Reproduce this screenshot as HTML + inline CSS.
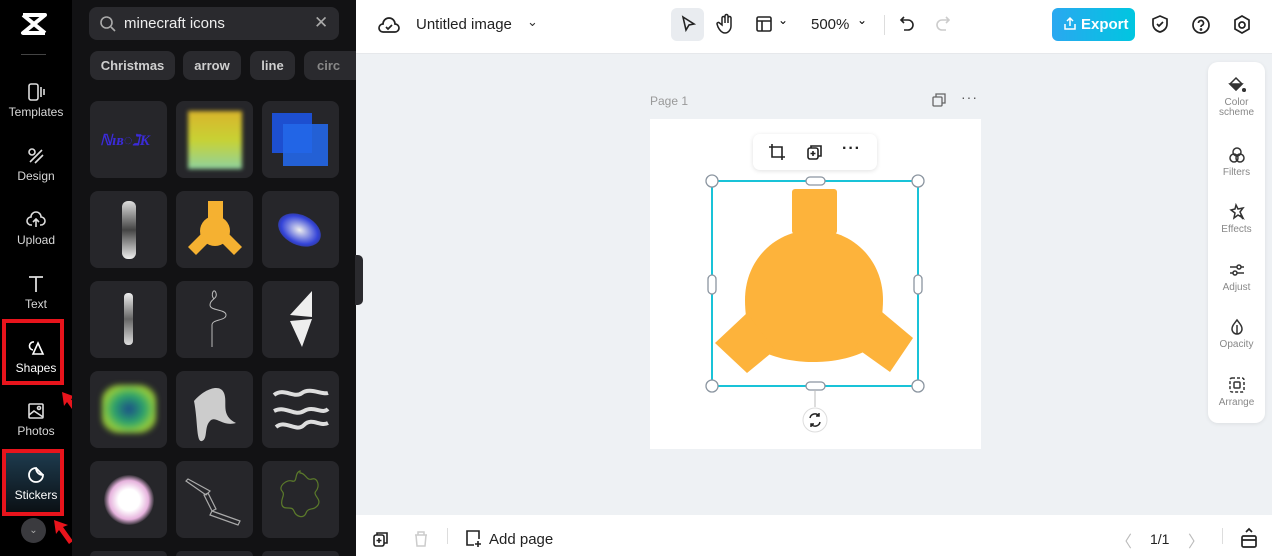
<!DOCTYPE html>
<html style="width:1272px;height:556px;overflow:hidden"><head><meta charset="utf-8"><style>
*{box-sizing:border-box;margin:0;padding:0}
body{width:1272px;height:556px;overflow:hidden;position:relative;font-family:"Liberation Sans",sans-serif;background:#eef1f4}
.abs{position:absolute}
.rail{left:0;top:0;width:72px;height:556px;background:#000;overflow:hidden}
.ri{position:absolute;left:0;width:72px;text-align:center;color:#d8d8d8;font-size:12px}
.ri svg{display:block;margin:0 auto 3px}
.panel{left:72px;top:0;width:284px;height:556px;background:#121214;overflow:hidden}
.tile{position:absolute;width:77px;height:77px;background:#26262a;border-radius:8px;overflow:hidden}
.chip{position:absolute;top:51px;height:29px;background:#2a2a2e;border-radius:8px;color:#cfcfcf;font-size:13px;font-weight:bold;line-height:29px;text-align:center}
.top{left:356px;top:0;width:916px;height:54px;background:#fff;border-bottom:1px solid #e6e8eb}
.bot{left:356px;top:515px;width:916px;height:41px;background:#fff}
.rp{left:1208px;top:62px;width:57px;height:361px;background:#fff;border-radius:10px;box-shadow:0 1px 4px rgba(0,0,0,.08)}
.rpi{position:absolute;left:0;width:57px;text-align:center;color:#888;font-size:10px;line-height:10px}
.rpi svg{display:block;margin:0 auto 4px}
</style></head><body>
<div class="abs rail">
 <svg class="abs" style="left:20px;top:12px" width="28" height="24" viewBox="0 0 28 24"><path d="M3 3h22L3 21h22M3 3l22 18" fill="none" stroke="#fff" stroke-width="4" stroke-linejoin="round"/></svg>
 <div class="abs" style="left:21px;top:54px;width:25px;height:1px;background:#444"></div>
 <div class="ri" style="top:82px"><svg width="20" height="20" viewBox="0 0 20 20" fill="none" stroke="#ddd" stroke-width="1.6"><rect x="3" y="2" width="9" height="16" rx="2"/><path d="M15 5v10M18 7v6"/></svg>Templates</div>
 <div class="ri" style="top:146px"><svg width="20" height="20" viewBox="0 0 20 20" fill="none" stroke="#ddd" stroke-width="1.6"><circle cx="6" cy="6" r="3"/><path d="M4 16l12-12M9 17l8-8"/></svg>Design</div>
 <div class="ri" style="top:210px"><svg width="20" height="20" viewBox="0 0 20 20" fill="none" stroke="#ddd" stroke-width="1.6"><path d="M6 15H5a4 4 0 0 1 0-8 5 5 0 0 1 10 0 4 4 0 0 1 0 8h-1M10 17V9M7 12l3-3 3 3"/></svg>Upload</div>
 <div class="ri" style="top:274px"><svg width="20" height="20" viewBox="0 0 20 20" fill="none" stroke="#ddd" stroke-width="1.8"><path d="M3 3h14M10 3v15"/></svg>Text</div>
 <div class="ri" style="top:338px;color:#fff"><svg width="20" height="20" viewBox="0 0 20 20" fill="none" stroke="#fff" stroke-width="1.6"><path d="M8 4a4 4 0 1 0-1 8M12 5l5 11H7z"/></svg>Shapes</div>
 <div class="abs" style="left:2px;top:319px;width:62px;height:66px;border:4px solid #e8141c"></div>
 <div class="ri" style="top:401px"><svg width="20" height="20" viewBox="0 0 20 20" fill="none" stroke="#ddd" stroke-width="1.6"><rect x="3" y="3" width="14" height="14" rx="1"/><path d="M3 14l5-4 9 6"/><circle cx="13" cy="7" r="1.5"/></svg>Photos</div>
 <div class="abs" style="left:5px;top:453px;width:56px;height:60px;background:linear-gradient(#1d3a4d,#0b1014)"></div>
 <div class="ri" style="top:465px;color:#fff"><svg width="20" height="20" viewBox="0 0 20 20" fill="none" stroke="#fff" stroke-width="1.8"><path d="M17 10a7 7 0 1 1-7-7c0 4 3 7 7 7zM10 3l7 7"/></svg>Stickers</div>
 <div class="abs" style="left:2px;top:449px;width:62px;height:67px;border:4px solid #e8141c"></div>
 <div class="abs" style="left:21px;top:518px;width:25px;height:25px;border-radius:50%;background:#3a3a3e;color:#aaa;font-size:10px;text-align:center;line-height:25px">⌄</div>
 <svg class="abs" style="left:58px;top:390px" width="26" height="34" viewBox="0 0 26 34"><path d="M4 2l2 14 3-4 10 14 4-3-10-14 5-2z" fill="#e8141c"/></svg>
 <svg class="abs" style="left:50px;top:518px" width="26" height="34" viewBox="0 0 26 34"><path d="M4 2l2 14 3-4 10 14 4-3-10-14 5-2z" fill="#e8141c"/></svg>
</div>
<div class="abs panel">
 <div class="abs" style="left:17px;top:7px;width:250px;height:33px;background:#2a2a2e;border-radius:8px"></div>
 <svg class="abs" style="left:27px;top:15px" width="18" height="18" viewBox="0 0 18 18" fill="none" stroke="#aaa" stroke-width="1.6"><circle cx="7.5" cy="7.5" r="5.5"/><path d="M12 12l4 4"/></svg>
 <div class="abs" style="left:52px;top:15px;color:#eee;font-size:15px">minecraft icons</div>
 <div class="abs" style="left:242px;top:13px;color:#aaa;font-size:17px">✕</div>
 <div class="chip" style="left:18px;width:85px">Christmas</div>
 <div class="chip" style="left:111px;width:58px">arrow</div>
 <div class="chip" style="left:178px;width:45px">line</div>
 <div class="chip" style="left:232px;width:52px;border-radius:8px 0 0 8px;color:#888;text-align:left;padding-left:13px">circ</div>
 <div class="tile" style="left:18px;top:101px"><div style="position:absolute;left:10px;top:30px;font:italic bold 15px 'Liberation Serif';color:#3b2bd8">ℕ︎ɪʙ◌ℷK</div></div>
 <div class="tile" style="left:104px;top:101px"><div style="position:absolute;left:12px;top:10px;width:54px;height:58px;background:linear-gradient(#d9b52c,#c8d234,#8fd29e);filter:blur(2px)"></div></div>
 <div class="tile" style="left:190px;top:101px"><div style="position:absolute;left:10px;top:12px;width:40px;height:40px;background:#1d4fd0"></div><div style="position:absolute;left:21px;top:23px;width:45px;height:42px;background:#2467e8;opacity:.9"></div></div>
 <div class="tile" style="left:18px;top:191px"><div style="position:absolute;left:32px;top:10px;width:14px;height:58px;background:linear-gradient(#ddd,#444,#eee);border-radius:6px"></div></div>
 <div class="tile" style="left:104px;top:191px"><svg width="77" height="77"><rect x="32" y="10" width="15" height="20" fill="#f5b131"/><circle cx="39" cy="40" r="15" fill="#f5b131"/><path d="M12 56l13-13 8 8-13 13zM66 56l-13-13-8 8 13 13z" fill="#f5b131"/></svg></div>
 <div class="tile" style="left:190px;top:191px"><div style="position:absolute;left:15px;top:24px;width:45px;height:30px;border-radius:50%;background:radial-gradient(#eee,#3444d8 60%,#26262a);transform:rotate(25deg)"></div></div>
 <div class="tile" style="left:18px;top:281px"><div style="position:absolute;left:34px;top:12px;width:9px;height:52px;background:linear-gradient(#eee,#666,#ddd);border-radius:4px"></div></div>
 <div class="tile" style="left:104px;top:281px"><svg width="77" height="77" fill="none" stroke="#bbb" stroke-width="1"><path d="M36 66V44c0-6 14-4 14-10s-16-4-16-10 8-6 6-12-6 2-2 6"/></svg></div>
 <div class="tile" style="left:190px;top:281px"><svg width="77" height="77"><path d="M50 10L28 34l22 2zM28 40l22-2-10 28z" fill="#eee"/></svg></div>
 <div class="tile" style="left:18px;top:371px"><div style="position:absolute;left:12px;top:14px;width:54px;height:48px;border-radius:30%;background:radial-gradient(#1a4c8a,#2ca36b 40%,#9bcf3a 70%,#26262a);filter:blur(3px)"></div></div>
 <div class="tile" style="left:104px;top:371px"><svg width="77" height="77"><path d="M18 30c10-12 26-18 30-8s-4 22 12 30c-14 4-20-8-26-2s-2 18-8 20-4-20-8-40z" fill="#ccc"/></svg></div>
 <div class="tile" style="left:190px;top:371px"><svg width="77" height="77" fill="none" stroke="#ddd" stroke-width="4"><path d="M12 24c10-8 20 4 28-2s20 2 26 0M12 40c12-6 20 6 30 0s18 4 24-2M14 56c10-8 20 6 28-2s16 2 24-2"/></svg></div>
 <div class="tile" style="left:18px;top:461px"><div style="position:absolute;left:14px;top:14px;width:50px;height:50px;border-radius:50%;background:radial-gradient(#fff 30%,#e6b3dd 55%,#26262a 72%)"></div></div>
 <div class="tile" style="left:104px;top:461px"><svg width="77" height="77" fill="none" stroke="#aaa" stroke-width="1.2"><path d="M12 18l22 12-4 4-20-14zM32 32l8 16-4 2-8-16zM36 50l28 10-2 4-28-10z"/></svg></div>
 <div class="tile" style="left:190px;top:461px"><svg width="77" height="77" fill="none" stroke="#5b7a2a" stroke-width="1.2"><path d="M38 12c6 0 6 8 12 6s8 8 4 12 6 8 2 14-10 2-12 8-10 4-12-2-10 0-12-6 4-10 0-14 4-12 10-10 2-8 8-10z"/></svg></div>
 <div class="tile" style="left:18px;top:551px;height:5px;border-radius:8px 8px 0 0"></div><div class="tile" style="left:104px;top:551px;height:5px;border-radius:8px 8px 0 0"></div><div class="tile" style="left:190px;top:551px;height:5px;border-radius:8px 8px 0 0"></div>
</div>
<div class="abs" style="left:355px;top:255px;width:8px;height:50px;background:#2a2a2e;border-radius:0 5px 5px 0"></div>
<div class="abs top">
 <svg class="abs" style="left:22px;top:15px" width="22" height="22" viewBox="0 0 22 22" fill="none" stroke="#222" stroke-width="1.7"><path d="M6 17H5a4 4 0 0 1 0-8 6 6 0 0 1 12 0 4 4 0 0 1 0 8z"/><path d="M8 12l2 2 4-4"/></svg>
 <div class="abs" style="left:60px;top:16px;font-size:15px;color:#222">Untitled image</div>
 <div class="abs" style="left:171px;top:14px;font-size:13px;color:#333">⌄</div>
 <div class="abs" style="left:315px;top:8px;width:33px;height:33px;background:#e9ecf0;border-radius:6px"></div>
 <svg class="abs" style="left:322px;top:14px" width="20" height="20" viewBox="0 0 20 20" fill="none" stroke="#222" stroke-width="1.6"><path d="M5 3l11 7-5 1-3 5z"/></svg>
 <svg class="abs" style="left:360px;top:13px" width="20" height="22" viewBox="0 0 20 22" fill="none" stroke="#222" stroke-width="1.5"><path d="M6 12V5a1.5 1.5 0 0 1 3 0v5V3a1.5 1.5 0 0 1 3 0v7V5a1.5 1.5 0 0 1 3 0v8c0 4-3 7-6 7s-5-2-7-6l-1-3a1.4 1.4 0 0 1 2.5-1z"/></svg>
 <svg class="abs" style="left:399px;top:15px" width="18" height="18" viewBox="0 0 18 18" fill="none" stroke="#222" stroke-width="1.6"><rect x="2" y="2" width="14" height="14" rx="1.5"/><path d="M2 6h14M7 6v10"/></svg>
 <div class="abs" style="left:422px;top:13px;font-size:12px">⌄</div>
 <div class="abs" style="left:455px;top:16px;font-size:15px;color:#222">500%</div>
 <div class="abs" style="left:501px;top:13px;font-size:12px">⌄</div>
 <div class="abs" style="left:528px;top:15px;width:1px;height:20px;background:#ddd"></div>
 <svg class="abs" style="left:542px;top:15px" width="18" height="18" viewBox="0 0 18 18" fill="none" stroke="#222" stroke-width="1.6"><path d="M6 2L3 5l3 3M3 5h7a5 5 0 0 1 0 10H6"/></svg>
 <svg class="abs" style="left:578px;top:15px" width="18" height="18" viewBox="0 0 18 18" fill="none" stroke="#ccc" stroke-width="1.6"><path d="M12 2l3 3-3 3M15 5H8a5 5 0 0 0 0 10h4"/></svg>
 <div class="abs" style="left:696px;top:8px;width:83px;height:33px;border-radius:6px;background:linear-gradient(90deg,#2aa8f0,#00c6e0);color:#fff;font-size:15px;font-weight:bold;line-height:33px;padding-left:29px">Export</div>
 <svg class="abs" style="left:707px;top:16px" width="14" height="15" viewBox="0 0 14 15" fill="none" stroke="#fff" stroke-width="1.5"><path d="M7 10V2M4 5l3-3 3 3M2 8v5h10V8"/></svg>
 <svg class="abs" style="left:795px;top:14px" width="18" height="20" viewBox="0 0 18 20" fill="none" stroke="#222" stroke-width="1.7"><path d="M9 2l7 3v5c0 4-3 7-7 8-4-1-7-4-7-8V5z"/><path d="M6 10l2 2 4-4"/></svg>
 <svg class="abs" style="left:835px;top:15px" width="20" height="20" viewBox="0 0 20 20" fill="none" stroke="#222" stroke-width="1.7"><circle cx="10" cy="10" r="8"/><path d="M7.5 8a2.5 2.5 0 1 1 3.5 2.3c-.8.4-1 1-1 1.7"/><circle cx="10" cy="14.5" r=".5" fill="#222"/></svg>
 <svg class="abs" style="left:876px;top:14px" width="20" height="22" viewBox="0 0 20 22" fill="none" stroke="#222" stroke-width="1.7"><path d="M10 2l7 4v9l-7 4-7-4V6z"/><circle cx="10" cy="11" r="3"/></svg>
</div>
<div class="abs" style="left:650px;top:94px;font-size:12px;color:#999">Page 1</div>
<svg class="abs" style="left:932px;top:93px" width="14" height="14" viewBox="0 0 14 14" fill="none" stroke="#666" stroke-width="1.3"><rect x="1" y="4" width="9" height="9" rx="1"/><path d="M4 4V1h9v9h-3"/></svg>
<div class="abs" style="left:961px;top:89px;font-size:14px;color:#555;letter-spacing:1px">···</div>
<div class="abs" style="left:650px;top:119px;width:331px;height:330px;background:#fff"></div>
<svg class="abs" style="left:0;top:0" width="1272" height="556">
 <g fill="#fdb33b">
  <rect x="792" y="189" width="45" height="45" rx="3"/>
  <path d="M745 300c0-40 30-70 69-70s69 30 69 70c0 25-8 45-15 50-20 10-40 12-54 12s-36-2-54-12c-8-6-15-25-15-50z"/>
  <path d="M715 343l32-30 28 37-28 23z"/>
  <path d="M913 338l-31-26-27 35 35 25z"/>
 </g>
 <rect x="712" y="181" width="206" height="205" fill="none" stroke="#19c3d8" stroke-width="2"/>
 <g fill="#fff" stroke="#8b95a0" stroke-width="1.3">
  <circle cx="712" cy="181" r="6"/><circle cx="918" cy="181" r="6"/><circle cx="712" cy="386" r="6"/><circle cx="918" cy="386" r="6"/>
  <rect x="806" y="177" width="19" height="8" rx="4"/><rect x="806" y="382" width="19" height="8" rx="4"/>
  <rect x="708" y="275" width="8" height="19" rx="4"/><rect x="914" y="275" width="8" height="19" rx="4"/>
 </g>
 <line x1="815" y1="390" x2="815" y2="407" stroke="#bbb"/>
 <circle cx="815" cy="420" r="12" fill="#fff" stroke="#ddd"/>
 <path d="M810 418a5 5 0 0 1 9-2M820 422a5 5 0 0 1-9 2M819 413v3h-3M811 427v-3h3" fill="none" stroke="#222" stroke-width="1.5"/>
</svg>
<div class="abs" style="left:753px;top:134px;width:124px;height:36px;background:#fff;border-radius:7px;box-shadow:0 1px 5px rgba(0,0,0,.12)"></div>
<svg class="abs" style="left:768px;top:143px" width="18" height="18" viewBox="0 0 18 18" fill="none" stroke="#222" stroke-width="1.6"><path d="M4 1v13h13M1 4h13v13"/></svg>
<svg class="abs" style="left:806px;top:143px" width="18" height="18" viewBox="0 0 18 18" fill="none" stroke="#222" stroke-width="1.6"><rect x="2" y="5" width="10" height="11" rx="2"/><path d="M5 5V3h10v10h-3M7 8v5M4.5 10.5h5"/></svg>
<div class="abs" style="left:842px;top:140px;font-size:16px;font-weight:bold;color:#222;letter-spacing:1px">···</div>
<div class="abs rp">
 <div class="rpi" style="top:14px"><svg width="18" height="18" viewBox="0 0 18 18" fill="none" stroke="#333" stroke-width="1.5"><path d="M8 2l6 6-6 6-6-6z"/><path d="M2 8h12l-6 6z" fill="#333"/><circle cx="16" cy="14" r="1.3" fill="#333"/></svg>Color<br>scheme</div>
 <div class="rpi" style="top:84px"><svg width="18" height="18" viewBox="0 0 18 18" fill="none" stroke="#333" stroke-width="1.5"><circle cx="9" cy="6" r="4"/><circle cx="6" cy="12" r="4"/><circle cx="12" cy="12" r="4"/></svg>Filters</div>
 <div class="rpi" style="top:141px"><svg width="18" height="18" viewBox="0 0 18 18" fill="none" stroke="#333" stroke-width="1.5"><path d="M8 2l2 4 5-1-3 4 3 6-5-3-4 3 1-5-4-3 4-1zM12 12l3 4"/></svg>Effects</div>
 <div class="rpi" style="top:199px"><svg width="18" height="18" viewBox="0 0 18 18" fill="none" stroke="#333" stroke-width="1.5"><path d="M2 6h14M2 12h14"/><circle cx="11" cy="6" r="2" fill="#fff"/><circle cx="7" cy="12" r="2" fill="#fff"/></svg>Adjust</div>
 <div class="rpi" style="top:256px"><svg width="18" height="18" viewBox="0 0 18 18" fill="none" stroke="#333" stroke-width="1.5"><path d="M9 2c3 4 5 6 5 9a5 5 0 0 1-10 0c0-3 2-5 5-9zM9 7v9"/></svg>Opacity</div>
 <div class="rpi" style="top:314px"><svg width="18" height="18" viewBox="0 0 18 18" fill="none" stroke="#333" stroke-width="1.5"><rect x="2" y="2" width="14" height="14" rx="2" stroke-dasharray="3 2"/><rect x="6" y="6" width="6" height="6" rx="1"/></svg>Arrange</div>
</div>
<div class="abs bot">
 <svg class="abs" style="left:16px;top:15px" width="18" height="18" viewBox="0 0 18 18" fill="none" stroke="#222" stroke-width="1.6"><rect x="2" y="5" width="10" height="11" rx="2"/><path d="M5 5V3h10v10h-3M7 8v5M4.5 10.5h5"/></svg>
 <svg class="abs" style="left:57px;top:15px" width="16" height="18" viewBox="0 0 16 18" fill="none" stroke="#ccc" stroke-width="1.5"><path d="M2 5h12M5 5V2h6v3M3 5l1 11h8l1-11"/></svg>
 <div class="abs" style="left:91px;top:13px;width:1px;height:16px;background:#ddd"></div>
 <svg class="abs" style="left:108px;top:14px" width="18" height="19" viewBox="0 0 18 19" fill="none" stroke="#222" stroke-width="1.6"><path d="M10 16H3V2h12v8M14 12v6M11 15h6"/></svg>
 <div class="abs" style="left:133px;top:16px;font-size:15px;color:#222">Add page</div>
 <div class="abs" style="left:760px;top:13px;font-size:16px;color:#bbb">〈</div>
 <div class="abs" style="left:794px;top:16px;font-size:14px;color:#222">1/1</div>
 <div class="abs" style="left:832px;top:13px;font-size:16px;color:#bbb">〉</div>
 <div class="abs" style="left:866px;top:13px;width:1px;height:16px;background:#ddd"></div>
 <svg class="abs" style="left:884px;top:12px" width="18" height="22" viewBox="0 0 18 22" fill="none" stroke="#222" stroke-width="1.7"><rect x="2" y="9" width="14" height="11" rx="1.5"/><path d="M2 13h14M6 5l3-3 3 3"/></svg>
</div>
</body></html>
